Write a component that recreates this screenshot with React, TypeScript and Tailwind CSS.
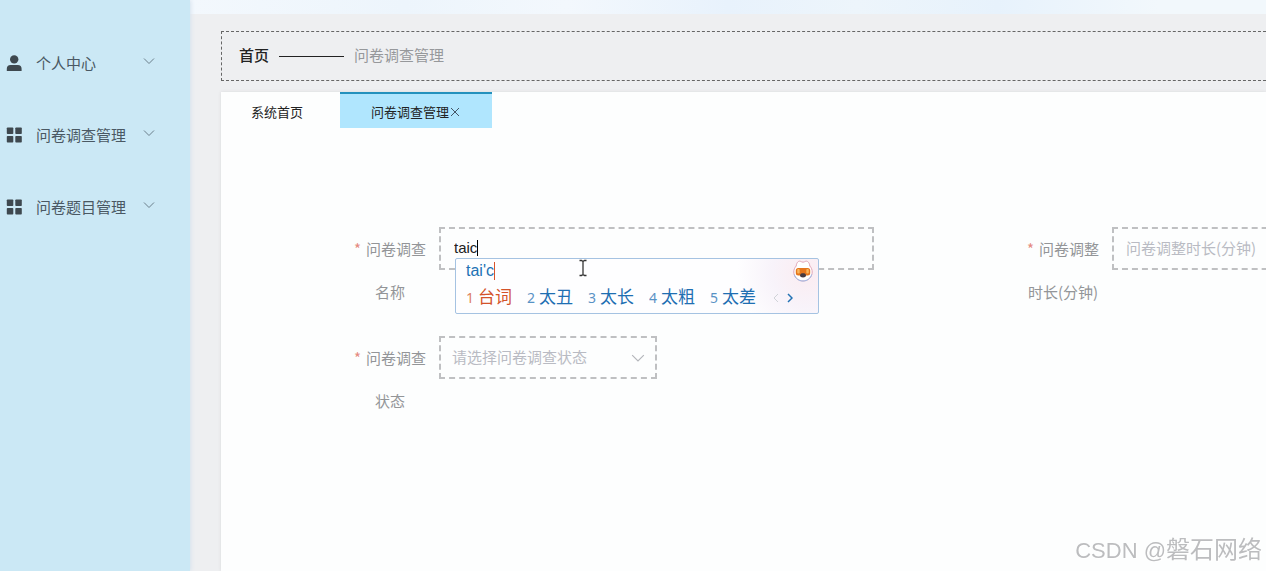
import { useState } from "react";
import type { ReactNode } from "react";

function UserIcon() {
  return (
    <svg viewBox="0 0 16 16" className="size-4 shrink-0" fill="currentColor" aria-hidden="true">
      <circle cx="8.200" cy="4.400" r="4.200" />
      <path d="M.8 16v-2.200A3.800 3.800 0 0 1 4.600 10h7.200a3.800 3.800 0 0 1 3.800 3.800V16Z" />
    </svg>
  );
}

function GridIcon() {
  return (
    <svg viewBox="0 0 16 16" className="size-4 shrink-0" fill="currentColor" aria-hidden="true">
      <rect x=".8" y=".5" width="6.500" height="6.500" rx=".8" />
      <rect x="9.300" y=".5" width="6.500" height="6.500" rx=".8" />
      <rect x=".8" y="9" width="6.500" height="6.500" rx=".8" />
      <rect x="9.300" y="9" width="6.500" height="6.500" rx=".8" />
    </svg>
  );
}

function ChevronDown({ className }: { className: string }) {
  return (
    <svg viewBox="0 0 12 12" className={className} fill="none" stroke="currentColor" aria-hidden="true">
      <path d="m1 3.500 5 5 5-5" />
    </svg>
  );
}

const menu = [
  { label: "个人中心", icon: <UserIcon /> },
  { label: "问卷调查管理", icon: <GridIcon /> },
  { label: "问卷题目管理", icon: <GridIcon /> },
];

const candidates = ["台词", "太丑", "太长", "太粗", "太差"];

function Sidebar() {
  return (
    <nav className="z-10 w-[190px] shrink-0 bg-[#cbe8f5] pt-[27px] shadow-[1px_0_4px_#d5e2ee]">
      {menu.map((item) => (
        <button
          key={item.label}
          type="button"
          className="flex h-[72px] w-full items-center pl-1.5 pr-[35px] text-left text-[15px] text-[#4a5863]"
        >
          <span className="text-[#3e484f]">{item.icon}</span>
          <span className="ml-3.5 flex-1">{item.label}</span>
          <ChevronDown className="mb-1 size-3 text-[#6b7f8b]" />
        </button>
      ))}
    </nav>
  );
}

function Field({ id, lines, children }: { id: string; lines: [string, string]; children: ReactNode }) {
  return (
    <div className="flex w-[673px] shrink-0 items-start">
      <label htmlFor={id} className="w-[98px] shrink-0 text-center leading-[43px] text-[#939598]">
        <span className="mr-[5px] text-[#e58a80]">*</span>
        {lines[0]}
        <br />
        {lines[1]}
      </label>
      {children}
    </div>
  );
}

function Mascot() {
  return (
    <svg viewBox="0 0 20 22" className="h-[22px] w-5" aria-hidden="true">
      <path
        d="M3.200 6C3.500 2.500 5.500.8 7.200 1.200c1.200.3 1.600 1 2.800 1s1.600-.7 2.800-1c1.700-.4 3.700 1.300 4 4.800 1.600 1.700 2.400 3.700 2.400 6 0 5-4 9-9.200 9S.8 17 .8 12c0-2.300.8-4.300 2.400-6Z"
        fill="#fff"
        stroke="#dfa6b8"
      />
      <path d="M1.300 14.500c1.200 4 4.700 6.500 8.700 6.500s7.500-2.500 8.700-6.500" fill="none" stroke="#9cbbe8" />
      <rect x="2.800" y="8" width="14.400" height="7.500" rx="2.500" fill="#e5761d" />
      <rect x="4.200" y="9" width="2.500" height="4.500" rx="1" fill="#f9b65c" />
      <rect x="13.300" y="9" width="2.500" height="4.500" rx="1" fill="#f9b65c" />
      <path d="M7 15.500c0-1.600 1.300-2.200 3-2.200s3 .6 3 2.200c0 1.200-1.300 2-3 2s-3-.8-3-2Z" fill="#463a42" />
    </svg>
  );
}

function CandidateWindow() {
  return (
    <div className="absolute left-4 top-[31px] z-20 h-14 w-[364px] overflow-hidden rounded-xs border border-[#a5c3e2] bg-[#fefeff] bg-[radial-gradient(circle_at_97%_25%,#fbecf1_0,#f8f3fa_35px,transparent_70px)] pl-2.5 font-['Liberation_Sans','Noto_Sans_CJK_SC',sans-serif]">
      <div className="flex h-6 items-center text-base text-[#2272b4]">
        tai&apos;c
        <span className="h-[18px] w-px bg-[#d9532c]" />
      </div>
      <ol className="flex h-[30px] items-center gap-[15px] text-[#1f6fb2]">
        {candidates.map((word, i) => (
          <li key={word} className={i === 0 ? "flex items-center gap-1 text-[#d3532b]" : "flex items-center gap-1"}>
            <span className="font-['Noto_Sans',sans-serif] text-sm opacity-75">{i + 1}</span>
            <span className="text-[17px]">{word}</span>
          </li>
        ))}
        <li className="ml-0.5 flex gap-2">
          <svg viewBox="0 0 6 10" className="h-2.5 w-1.5" fill="none" stroke="#d0d3d8" aria-hidden="true">
            <path d="M5 1 1 5l4 4" />
          </svg>
          <svg viewBox="0 0 6 10" className="h-2.5 w-1.5" fill="none" stroke="#2272b4" strokeWidth="1.500" aria-hidden="true">
            <path d="m1 1 4 4-4 4" />
          </svg>
        </li>
      </ol>
      <span className="absolute right-[5px] top-px">
        <Mascot />
      </span>
      <svg viewBox="0 0 8 18" className="absolute left-[123px] top-0 h-[18px] w-2" fill="none" stroke="#333" strokeWidth="1.300" aria-hidden="true">
        <path d="M.5 1.500h2L4 2.500l1.500-1h2M4 2.500v13M.5 16.500h2l1.500-1 1.500 1h2" />
      </svg>
    </div>
  );
}

export default function App() {
  const [name, setName] = useState("taic");
  return (
    <div className="flex min-h-screen overflow-hidden bg-[#eeeff1] font-['Noto_Sans_CJK_SC',sans-serif] text-[15px]">
      <Sidebar />
      <main className="flex min-w-0 flex-1 flex-col">
        <header className="h-3.5 bg-[linear-gradient(90deg,#f3f8fd_0%,#edf5fc_20%,#f3f8fd_35%,#e8f2fc_50%,#edf5fb_62%,#e7f2fc_75%,#f2f8fc_90%)]" />
        <div className="ml-[31px] mt-[17px] flex h-[50px] items-center border border-r-0 border-dashed border-[#666] pb-0.5 pl-[17px] text-[#222]">
          <a href="#home" className="font-medium">首页</a>
          <span className="ml-2.5 mt-0.5 h-px w-[65px] bg-[#222]" />
          <span className="ml-2.5 text-[#96989b]">问卷调查管理</span>
        </div>
        <section className="ml-[31px] mt-[11px] flex-1 bg-[#fdfefe] shadow-[0_0_3px_#d8d9db]">
          <div className="flex h-9 gap-[7px] text-[13px] text-[#222]">
            <button type="button" className="px-[30px] pt-1">系统首页</button>
            <button type="button" className="flex w-[152px] items-center justify-center border-t-2 border-[#2491bd] bg-[#b0e6fe] pt-0.5">
              问卷调查管理
              <svg viewBox="0 0 12 12" className="size-3" fill="none" stroke="#456" aria-hidden="true">
                <path d="m2 2 8 8m0-8-8 8" />
              </svg>
            </button>
          </div>
          <form className="flex flex-col gap-[23px] overflow-hidden pl-[120px] pt-[99px]">
            <div className="flex">
              <Field id="name" lines={["问卷调查", "名称"]}>
                <div className="relative w-[435px]">
                  <input
                    id="name"
                    value={name}
                    onChange={(e) => setName(e.target.value)}
                    className="h-[43px] w-full border-2 border-dashed border-[#bfc0c2] bg-transparent px-[13px] pb-0.5 font-['Liberation_Sans',sans-serif] text-[#222] outline-none"
                  />
                  <span className="absolute left-[38px] top-[13px] h-4 w-px bg-black" />
                  <CandidateWindow />
                </div>
              </Field>
              <Field id="duration" lines={["问卷调整", "时长(分钟)"]}>
                <input
                  id="duration"
                  placeholder="问卷调整时长(分钟)"
                  className="h-[43px] w-[435px] border-2 border-dashed border-[#bfc0c2] bg-transparent px-3 pb-0.5 outline-none placeholder:text-[#b9bbc3]"
                />
              </Field>
            </div>
            <Field id="status" lines={["问卷调查", "状态"]}>
              <div className="relative w-[218px]">
                <select
                  id="status"
                  defaultValue=""
                  className="h-[43px] w-full appearance-none border-2 border-dashed border-[#bfc0c2] bg-transparent pl-[11px] pr-8 text-[#b9bbc3] outline-none"
                >
                  <option value="">请选择问卷调查状态</option>
                </select>
                <ChevronDown className="pointer-events-none absolute right-3 top-[15px] size-3.5 text-[#b4b6bb]" />
              </div>
            </Field>
          </form>
        </section>
      </main>
      <div className="fixed bottom-1.5 right-1 font-['Noto_Sans_CJK_SC',sans-serif] text-2xl text-[#bcbdbf] [text-shadow:1px_1px_0_#fff]">
        <span className="font-['Liberation_Sans',sans-serif] text-[22px]">CSDN @</span>磐石网络
      </div>
    </div>
  );
}
